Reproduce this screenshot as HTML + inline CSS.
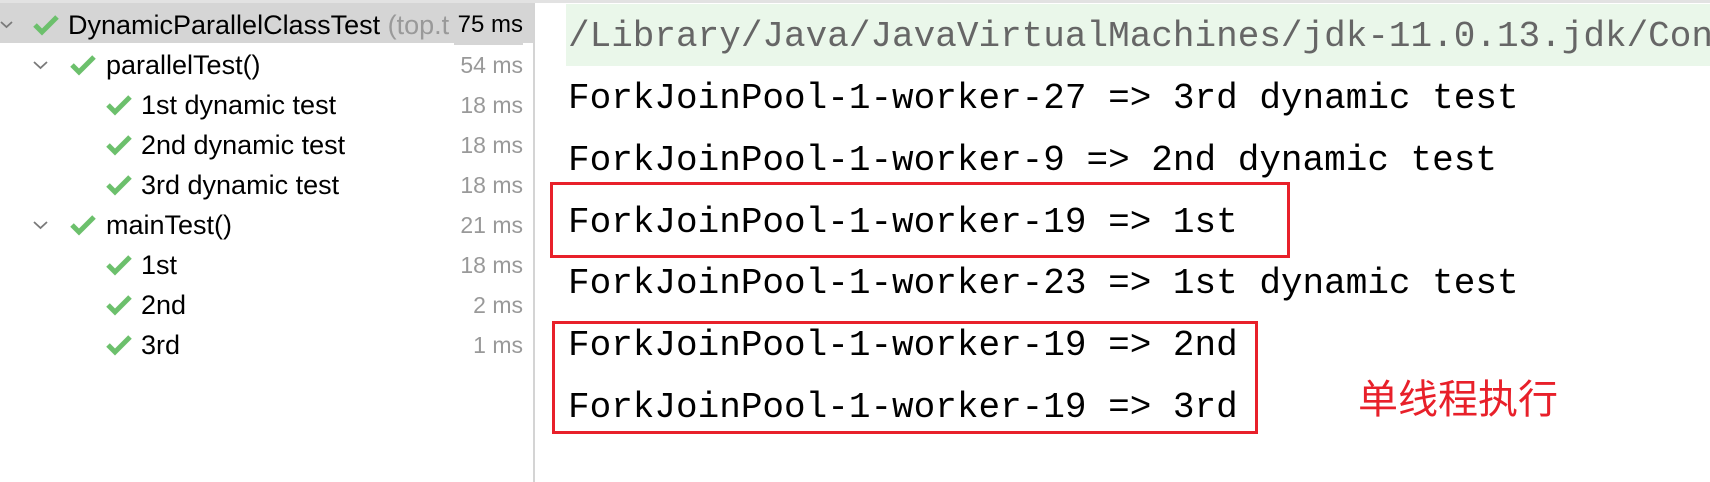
<!DOCTYPE html>
<html><head><meta charset="utf-8"><style>
*{margin:0;padding:0;box-sizing:border-box}
body{width:1710px;height:482px;background:#fff;position:relative;overflow:hidden;font-family:"Liberation Sans",sans-serif}
.top{position:absolute;left:0;top:0;width:1710px;height:3px;background:#e2e2e2}
.sel{position:absolute;left:0;top:3px;width:533px;height:40px;background:#d5d5d5}
.div{position:absolute;left:533px;top:3px;width:2px;height:479px;background:#d4d4d4}
.row{position:absolute;left:0;width:533px;height:40px;font-size:27px;color:#000;line-height:40px;overflow:hidden}
.row .t{position:absolute;white-space:nowrap}
.row .ms{position:absolute;right:10px;color:#999;font-size:23px}
.row svg{position:absolute;top:0}
.hdr{position:absolute;left:566px;top:4px;width:1144px;height:62px;background:#eaf7ea}
.right{position:absolute;left:535px;top:0;width:1175px;height:482px;overflow:hidden}
.mono{position:absolute;left:33px;font-family:"Liberation Mono",monospace;font-size:36px;white-space:nowrap;line-height:40px;color:#000}
.box{position:absolute;border:3px solid #e8202a}
.cn{position:absolute;left:1358px;top:380px;font-size:40px;color:#e8202a;font-family:"Liberation Sans","Noto Sans CJK SC",sans-serif;line-height:40px}
</style></head><body>
<div class="top"></div>
<div class="sel"></div>
<div class="div"></div>

<div class="row" style="top:5px">
<svg width="14" height="40" style="left:0"><path d="M1 17 L6.5 22 L12 17" stroke="#7a7a7a" stroke-width="1.8" fill="none"/></svg>
<svg width="26" height="40" style="left:33px"><path d="M2 20 L9 27 L24 12" stroke="#6cc06c" stroke-width="5" fill="none"/></svg>
<span class="t" style="left:68px">DynamicParallelClassTest <span style="color:#999">(top.t</span></span>
<span class="ms" style="color:#000;background:#d5d5d5;padding-left:4px;font-size:24px">75 ms</span>
</div>

<div class="row" style="top:45px">
<svg width="18" height="40" style="left:32px"><path d="M2 17 L8.5 23 L15 17" stroke="#7a7a7a" stroke-width="1.8" fill="none"/></svg>
<svg width="26" height="40" style="left:70px"><path d="M2 20 L9 27 L24 12" stroke="#6cc06c" stroke-width="5" fill="none"/></svg>
<span class="t" style="left:106px">parallelTest()</span><span class="ms">54 ms</span></div>

<div class="row" style="top:85px"><svg width="26" height="40" style="left:106px"><path d="M2 20 L9 27 L24 12" stroke="#6cc06c" stroke-width="5" fill="none"/></svg><span class="t" style="left:141px">1st dynamic test</span><span class="ms">18 ms</span></div>
<div class="row" style="top:125px"><svg width="26" height="40" style="left:106px"><path d="M2 20 L9 27 L24 12" stroke="#6cc06c" stroke-width="5" fill="none"/></svg><span class="t" style="left:141px">2nd dynamic test</span><span class="ms">18 ms</span></div>
<div class="row" style="top:165px"><svg width="26" height="40" style="left:106px"><path d="M2 20 L9 27 L24 12" stroke="#6cc06c" stroke-width="5" fill="none"/></svg><span class="t" style="left:141px">3rd dynamic test</span><span class="ms">18 ms</span></div>

<div class="row" style="top:205px">
<svg width="18" height="40" style="left:32px"><path d="M2 17 L8.5 23 L15 17" stroke="#7a7a7a" stroke-width="1.8" fill="none"/></svg>
<svg width="26" height="40" style="left:70px"><path d="M2 20 L9 27 L24 12" stroke="#6cc06c" stroke-width="5" fill="none"/></svg>
<span class="t" style="left:106px">mainTest()</span><span class="ms">21 ms</span></div>

<div class="row" style="top:245px"><svg width="26" height="40" style="left:106px"><path d="M2 20 L9 27 L24 12" stroke="#6cc06c" stroke-width="5" fill="none"/></svg><span class="t" style="left:141px">1st</span><span class="ms">18 ms</span></div>
<div class="row" style="top:285px"><svg width="26" height="40" style="left:106px"><path d="M2 20 L9 27 L24 12" stroke="#6cc06c" stroke-width="5" fill="none"/></svg><span class="t" style="left:141px">2nd</span><span class="ms">2 ms</span></div>
<div class="row" style="top:325px"><svg width="26" height="40" style="left:106px"><path d="M2 20 L9 27 L24 12" stroke="#6cc06c" stroke-width="5" fill="none"/></svg><span class="t" style="left:141px">3rd</span><span class="ms">1 ms</span></div>

<div class="hdr"></div>
<div class="right">
<div class="mono" style="top:17px;color:#666">/Library/Java/JavaVirtualMachines/jdk-11.0.13.jdk/Con</div>
<div class="mono" style="top:79px">ForkJoinPool-1-worker-27 =&gt; 3rd dynamic test</div>
<div class="mono" style="top:141px">ForkJoinPool-1-worker-9 =&gt; 2nd dynamic test</div>
<div class="mono" style="top:203px">ForkJoinPool-1-worker-19 =&gt; 1st</div>
<div class="mono" style="top:264px">ForkJoinPool-1-worker-23 =&gt; 1st dynamic test</div>
<div class="mono" style="top:326px">ForkJoinPool-1-worker-19 =&gt; 2nd</div>
<div class="mono" style="top:388px">ForkJoinPool-1-worker-19 =&gt; 3rd</div>
</div>

<div class="box" style="left:550px;top:182px;width:740px;height:76px"></div>
<div class="box" style="left:552px;top:321px;width:706px;height:113px"></div>
<div class="cn">单线程执行</div>
</body></html>
